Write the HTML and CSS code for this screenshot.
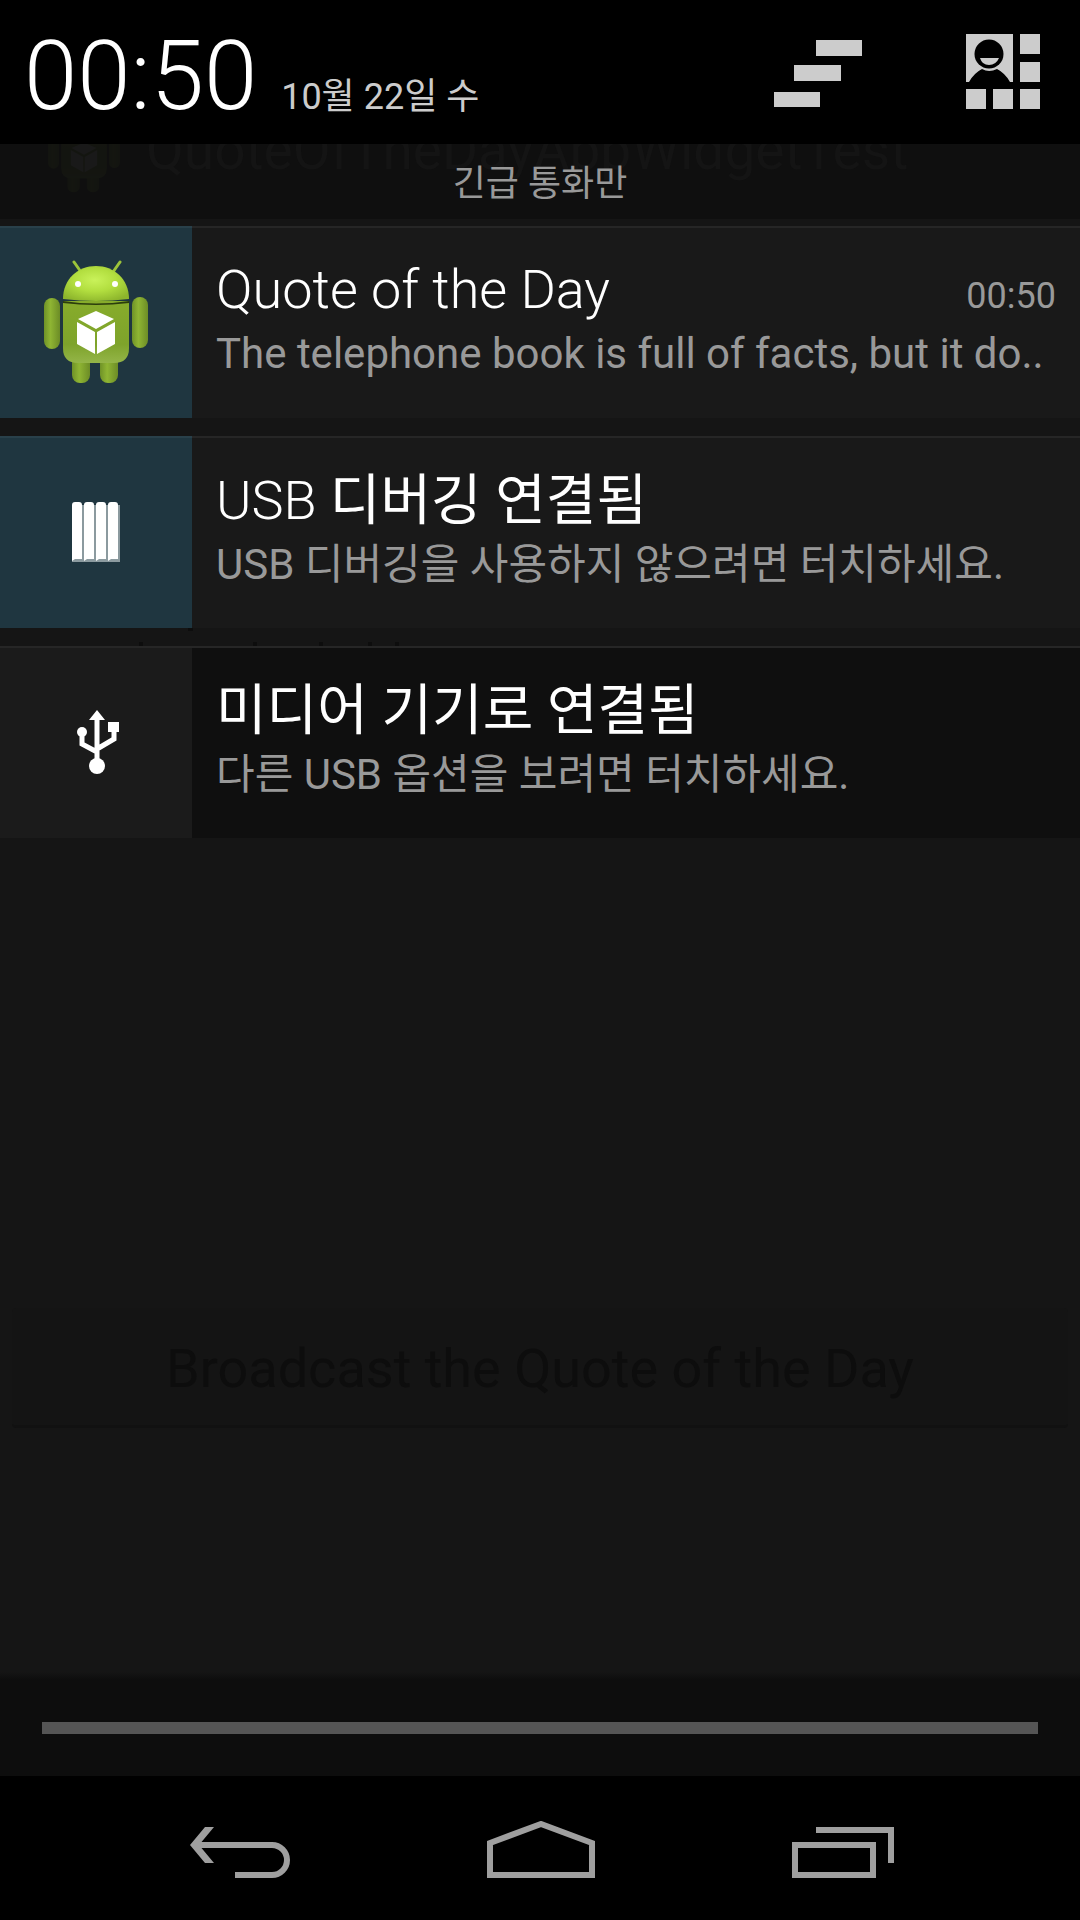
FILE: index.html
```html
<!DOCTYPE html>
<html lang="ko">
<head>
<meta charset="utf-8">
<meta name="viewport" content="width=device-width, initial-scale=1">
<title>알림</title>
<link rel="stylesheet" href="styles.css">
</head>
<body>
<svg class="defs" aria-hidden="true">
  <defs>
    <linearGradient id="limb" x1="0" y1="0" x2="1" y2="0">
      <stop offset="0" stop-color="#6f9227"/><stop offset=".4" stop-color="#8fb533"/><stop offset="1" stop-color="#6c8c26"/>
    </linearGradient>
    <linearGradient id="torso" x1="0" y1="0" x2="0" y2="1">
      <stop offset="0" stop-color="#87ac2b"/><stop offset=".7" stop-color="#7ea32b"/><stop offset="1" stop-color="#94b548"/>
    </linearGradient>
    <radialGradient id="head" cx=".48" cy=".4" r=".65">
      <stop offset="0" stop-color="#c9f25a"/><stop offset=".5" stop-color="#b2de3f"/><stop offset="1" stop-color="#8db52c"/>
    </radialGradient>
    <symbol id="robot" viewBox="0 0 104 124">
      <path d="M30 2l7 10M76 2l-7 10" stroke="#9dc43a" stroke-width="3" stroke-linecap="round"/>
      <rect x="28" y="92" width="18" height="31" rx="8" fill="url(#limb)"/>
      <rect x="56" y="92" width="18" height="31" rx="8" fill="url(#limb)"/>
      <rect x="0" y="38" width="16" height="51" rx="8" fill="url(#limb)"/>
      <rect x="88" y="37" width="16" height="51" rx="8" fill="url(#limb)"/>
      <path d="M19 41h66v47q0 15-15 15H34q-15 0-15-15z" fill="url(#torso)"/>
      <path d="M19 41q33 5 66 0v2q-33 4-66 0z" fill="#2b3d0c"/>
      <path d="M19 39C19 19 34 6 52 6s33 13 33 33q-33 4-66 0z" fill="url(#head)"/>
      <circle cx="34" cy="24" r="3" fill="#fff"/><circle cx="71" cy="24" r="3" fill="#fff"/>
      <path d="M52 51L70 59 52 69 34 59zM33 62l18 10v22L33 84zM71 62L53 72v22l18-10z" fill="#fff"/>
    </symbol>
  </defs>
</svg>
<div class="screen">
  <div class="app" aria-hidden="true">
    <div class="app-bar">
      <svg class="app-icon"><use href="#robot"/></svg>
      <span class="app-title">QuoteOfTheDayAppWidgetTest</span>
    </div>
    <div class="app-body">
      <svg width="400" height="18" viewBox="0 0 400 18"><path fill="#0d0d0d" d="M176 0h5v3h-5zM127 14h4v4h-4zM241 14h4v4h-4zM307 14h4v4h-4zM356 14h4v4h-4zM383 14h4v4h-4z"/></svg>
      <button class="broadcast" type="button" tabindex="-1">Broadcast the Quote of the Day</button>
    </div>
  </div>
  <div class="shade">
    <header class="status">
      <time class="clock">00:50</time>
      <span class="date">10월 22일 수</span>
      <button class="tool" type="button" aria-label="모두 지우기">
        <svg width="90" height="70" viewBox="0 0 90 70"><path fill="#ccc" d="M42 0h46v16H42zM20 25h47v16H20zM0 52h46v15H0z"/></svg>
      </button>
      <button class="tool" type="button" aria-label="빠른 설정">
        <svg width="74" height="76" viewBox="0 0 74 76"><path fill="#ccc" d="M0 0h47v48H0zM54 0h20v20H54zM54 28h20v20H54zM0 55h20v20H0zM27 55h20v20H27zM54 55h20v20H54z"/><path d="M3 48Q8 39 16 35q7 4 15 0 8 4 13 13z"/><circle cx="23" cy="20" r="14.500"/><path d="M14 24h19q-3 7-10 7t-9-7z" fill="#ccc"/></svg>
      </button>
    </header>
    <p class="carrier">긴급 통화만</p>
    <main class="list">
      <article class="note">
        <div class="icon teal"><svg width="104" height="124"><use href="#robot"/></svg></div>
        <div class="text">
          <div class="head"><h2>Quote of the Day</h2><time>00:50</time></div>
          <p>The telephone book is full of facts, but it do..</p>
        </div>
      </article>
      <article class="note">
        <div class="icon teal">
          <svg width="48" height="60" viewBox="0 0 48 60"><path fill="#8b9a9f" d="M0 60V3h48v57z"/><path fill="#fff" d="M0 59V3q0-3 3-3h4q3 0 3 3v54H3zM12 59V3q0-3 3-3h4q3 0 3 3v54h-7zM24 59V3q0-3 3-3h4q3 0 3 3v54h-7zM36 59V3q0-3 3-3h4q3 0 3 3v54h-7z"/></svg>
        </div>
        <div class="text">
          <div class="head"><h2><span>USB</span> <span class="ko">디버깅 연결됨</span></h2></div>
          <p>USB 디버깅을 사용하지 않으려면 터치하세요.</p>
        </div>
      </article>
      <article class="note quiet">
        <div class="icon">
          <svg class="usb" width="42" height="64" viewBox="0 0 42 64"><path d="M20 8v44M5 22v12l15 8M37 18v11L20 39" fill="none" stroke="#fff" stroke-width="5"/><path d="M20 0l8 10H12zM31 12h11v10H31z" fill="#fff"/><circle cx="5" cy="22" r="5" fill="#fff"/><circle cx="20" cy="56" r="8" fill="#fff"/></svg>
        </div>
        <div class="text">
          <div class="head"><h2><span class="ko">미디어 기기로 연결됨</span></h2></div>
          <p>다른 USB 옵션을 보려면 터치하세요.</p>
        </div>
      </article>
    </main>
    <div class="handle"><span></span></div>
    <nav class="nav">
      <button type="button" aria-label="뒤로"><svg width="100" height="58" viewBox="0 0 100 58" fill="none" stroke="#9f9f9f" stroke-width="6"><path d="M8 24h74a15 15 0 0 1 0 30H45"/><path d="M15 6L0 24l15 18h9L9 24 24 6z" fill="#9f9f9f" stroke="none"/></svg></button>
      <button type="button" aria-label="홈"><svg width="108" height="58" viewBox="0 0 108 58" fill="none" stroke="#9f9f9f" stroke-width="6"><path d="M3 54V22L54 3l51 19v32z"/></svg></button>
      <button type="button" aria-label="최근 앱"><svg width="102" height="58" viewBox="0 0 102 58" fill="none" stroke="#9f9f9f" stroke-width="6"><path d="M3 24h78v30H3zM24 9h75v33"/></svg></button>
    </nav>
  </div>
</div>
</body>
</html>
```
FILE: styles.css
```css
* { box-sizing: border-box; margin: 0; }
body { background: #151515; color: #fff; font-family: Roboto, "Noto Sans CJK KR", sans-serif; }
button { border: 0; padding: 0; background: none; font: inherit; }
svg { display: block; }
.defs { position: absolute; width: 0; height: 0; }
.screen { display: grid; min-height: 100vh; }
.app, .shade { grid-area: 1 / 1; min-width: 0; display: flex; flex-direction: column; }
.shade { isolation: isolate; }

/* dimmed activity under the shade */
.app-bar { height: 219px; padding: 80px 48px 0; display: flex; align-items: center; gap: 26px; background: #0f0f0f; white-space: nowrap; }
.app-icon { width: 72px; height: 86px; opacity: .04; }
.app-title { font-size: 55px; line-height: 64px; color: #141414; }
.app-body { padding: 409px 12px 0; }
.broadcast { display: block; width: 100%; height: 120px; margin-top: 662px; padding-top: 4px; border-radius: 4px; border-bottom: 3px solid #111; background: #141414; color: #0d0d0d; font-size: 54px; }

.status { height: 144px; background: #000; display: flex; align-items: flex-start; padding: 0 40px 0 24px; }
.clock { font-size: 96px; font-weight: 300; line-height: 112px; padding-top: 20px; }
.date { flex: 1; margin-left: 24px; padding-top: 75px; font-size: 36px; line-height: 44px; color: #ccc; }
.tool { padding-top: 34px; }
.tool:first-of-type { margin-right: 102px; padding-top: 40px; }
.carrier { height: 82px; padding-top: 18px; text-align: center; font-size: 36px; line-height: 44px; color: #999; }

.list { display: flex; flex-direction: column; gap: 18px; }
.note { display: flex; height: 192px; background: #191919; box-shadow: inset 0 2px #262626; }
.quiet { background: #0f0f0f; }
.icon { width: 192px; flex: none; display: grid; place-items: center; background: #1b1b1b; box-shadow: inset 0 2px #262626; }
.teal { background: #1f3640; box-shadow: inset 0 2px #29404a; }
.usb { margin-left: 4px; }
.text { flex: 1; min-width: 0; padding: 28px 24px 0; }
.head { display: flex; justify-content: space-between; align-items: baseline; }
h2 { font-size: 54px; font-weight: 300; line-height: 72px; }
.ko { font-size: 55px; font-weight: 400; }
.head time { font-size: 36px; line-height: 44px; color: #999; }
.text p { font-size: 42px; line-height: 56px; color: #999; white-space: nowrap; }

.handle { margin-top: auto; height: 104px; padding: 50px 42px 0; background: linear-gradient(#0d0d0d00, #0d0d0d 8px); }
.handle span { display: block; height: 12px; background: #555; }
.nav { height: 144px; padding: 4px 186px 0 190px; background: #000; display: flex; justify-content: space-between; align-items: center; }
```
